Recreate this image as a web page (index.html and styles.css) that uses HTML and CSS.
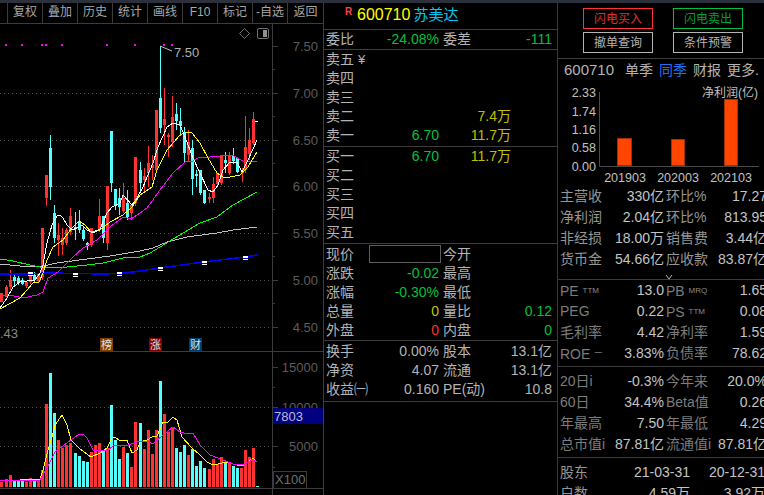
FILE: index.html

```html
<!DOCTYPE html>
<html lang="zh-CN">
<head>
    <meta charset="UTF-8">
    <title>600710 苏美达</title>
    <link rel="stylesheet" href="styles.css">
</head>
<body>
    <div class="top-strip"></div>
    <div class="app">
        <section class="chart-pane">
            <nav class="toolbar">
                <span>复权</span><span>叠加</span><span>历史</span><span>统计</span><span>画线</span><span>F10</span><span>标记</span><span>-自选</span><span>返回</span>
            </nav>
            <svg class="chart" id="kline" width="323" height="471" viewBox="0 24 323 471">
                <g class="grid-lines">
                    <path d="M0 93.5H272M0 140.5H272M0 186.5H272M0 233.5H272M0 280.5H272M0 327.5H272M0 407.5H272M0 446.5H272"/>
                </g>
                <g id="candles"></g>
                <g id="volumes"></g>
                <g id="lines"></g>
                <g id="markers"></g>

                <path class="axis" d="M272.5 23V495M0 351.5H323M0 488.5H323"/>
                <path class="axis" d="M272 46.5h6M272 69.5h3M272 93.5h6M272 116.5h3M272 140.5h6M272 163.5h3M272 186.5h6M272 209.5h3M272 233.5h6M272 256.5h3M272 280.5h6M272 303.5h3M272 327.5h6M272 367.5h6M272 387.5h3M272 407.5h6M272 446.5h6M272 467.5h3"/>
                <g class="axis-text">
                    <text x="318" y="51">7.50</text>
                    <text x="318" y="98">7.00</text>
                    <text x="318" y="145">6.50</text>
                    <text x="318" y="191">6.00</text>
                    <text x="318" y="238">5.50</text>
                    <text x="318" y="285">5.00</text>
                    <text x="318" y="332">4.50</text>
                    <text x="318" y="372">15000</text>
                    <text x="318" y="412">10000</text>
                    <text x="318" y="451">5000</text>
                </g>
                <rect class="vol-box" x="273" y="408" width="50" height="16"/>
                <text class="vol-now" x="274" y="421">7803</text>
                <rect class="zoom-box" x="273.5" y="471.5" width="33" height="17"/>
                <text class="zoom-text" x="275" y="484">X100</text>

                <path class="hi-line" d="M160 46L172 51"/>
                <text class="hi-text" x="174" y="57">7.50</text>
                <text class="lo-text" x="0" y="338">.43</text>

                <rect class="badge badge-brown" x="100" y="338" width="13" height="13"/>
                <text class="badge-text" x="101" y="349">榜</text>
                <rect class="badge badge-red" x="149" y="338" width="13" height="13"/>
                <text class="badge-text" x="150" y="349">涨</text>
                <rect class="badge badge-blue" x="189" y="338" width="13" height="13"/>
                <text class="badge-text" x="190" y="349">财</text>

                <path class="diamond" d="M244.5 28.5l5 5-5 5-5-5z"/>
                <rect class="toggle" x="257.5" y="28.5" width="11" height="10" rx="1.5"/>
                <rect class="toggle-fill" x="263" y="30" width="4" height="7"/>
            </svg>
        </section>

        <section class="quote-pane">
            <div class="stock-title">
                <span class="r-mark">R</span><span class="code">600710</span><span class="name">苏美达</span>
            </div>
            <div class="block">
                <div class="row row-four">
                    <span>委比</span><span class="num green">-24.08%</span><span class="label2">委差</span><span class="num green">-111</span>
                </div>
            </div>
            <div class="block book">
                <div class="row row-book"><span>卖五 <i class="yen">¥</i></span><span></span><span></span></div>
                <div class="row row-book"><span>卖四</span><span></span><span></span></div>
                <div class="row row-book"><span>卖三</span><span></span><span></span></div>
                <div class="row row-book"><span>卖二</span><span></span><span class="num yellow">7.4万</span></div>
                <div class="row row-book"><span>卖一</span><span class="num green">6.70</span><span class="num yellow">11.7万</span></div>
            </div>
            <div class="block book">
                <div class="row row-book"><span>买一</span><span class="num green">6.70</span><span class="num yellow">11.7万</span></div>
                <div class="row row-book"><span>买二</span><span></span><span></span></div>
                <div class="row row-book"><span>买三</span><span></span><span></span></div>
                <div class="row row-book"><span>买四</span><span></span><span></span></div>
                <div class="row row-book"><span>买五</span><span></span><span></span></div>
            </div>
            <div class="block book summary">
                <div class="row row-four"><span>现价</span><span class="price-box"></span><span class="label2">今开</span><span></span></div>
                <div class="row row-four"><span>涨跌</span><span class="num green">-0.02</span><span class="label2">最高</span><span></span></div>
                <div class="row row-four"><span>涨幅</span><span class="num green">-0.30%</span><span class="label2">最低</span><span></span></div>
                <div class="row row-four"><span>总量</span><span class="num yellow">0</span><span class="label2">量比</span><span class="num green">0.12</span></div>
                <div class="row row-four"><span>外盘</span><span class="num red">0</span><span class="label2">内盘</span><span class="num green">0</span></div>
            </div>
            <div class="block stats">
                <div class="row row-four"><span>换手</span><span class="num">0.00%</span><span class="label2">股本</span><span class="num">13.1亿</span></div>
                <div class="row row-four"><span>净资</span><span class="num">4.07</span><span class="label2">流通</span><span class="num">13.1亿</span></div>
                <div class="row row-four"><span>收益㈠</span><span class="num">0.160</span><span class="label2">PE(动)</span><span class="num">10.8</span></div>
            </div>
        </section>

        <section class="info-pane">
            <div class="trade-buttons">
                <button class="btn btn-buy">闪电买入</button>
                <button class="btn btn-sell">闪电卖出</button>
                <button class="btn">撤单查询</button>
                <button class="btn">条件预警</button>
            </div>
            <div class="tabs">
                <span class="tabs-code">600710</span>
                <span>单季</span><span class="tab-on">同季</span><span>财报</span><span>更多.</span>
            </div>
            <svg class="profit" width="206" height="105" viewBox="558 81 206 105">
                <path class="profit-axis" d="M599.5 92V166.5H759"/>
                <g class="profit-y">
                    <text x="596" y="97">2.33</text>
                    <text x="596" y="116">1.74</text>
                    <text x="596" y="134">1.16</text>
                    <text x="596" y="152">0.58</text>
                    <text x="596" y="171">0.00</text>
                </g>
                <text class="profit-title" x="702" y="97">净利润(亿)</text>
                <rect class="profit-bar" x="617.5" y="138.5" width="14" height="27"/>
                <rect class="profit-bar" x="671.5" y="139.5" width="13" height="26"/>
                <rect class="profit-bar" x="724.5" y="99.5" width="13" height="66"/>
                <g class="profit-x">
                    <text x="625" y="182">201903</text>
                    <text x="678" y="182">202003</text>
                    <text x="731" y="182">202103</text>
                </g>
            </svg>
            <div class="fin-block">
                <div class="fin-row"><span>主营收</span><span class="val">330亿</span><span>环比%</span><span class="val">17.27</span></div>
                <div class="fin-row"><span>净利润</span><span class="val">2.04亿</span><span>环比%</span><span class="val">813.95</span></div>
                <div class="fin-row"><span>非经损</span><span class="val">18.00万</span><span>销售费</span><span class="val">3.44亿</span></div>
                <div class="fin-row"><span>货币金</span><span class="val">54.66亿</span><span>应收款</span><span class="val">83.87亿</span></div>
                <div class="more-row">
                    <svg width="8" height="6" viewBox="0 0 8 6"><path d="M1 1L4 5L7 1"/></svg>
                </div>
            </div>
            <div class="fin-block dim-block">
                <div class="fin-row"><span>PE <small>TTM</small></span><span class="val">13.0</span><span>PB <small>MRQ</small></span><span class="val">1.65</span></div>
                <div class="fin-row"><span>PEG</span><span class="val">0.22</span><span>PS <small>TTM</small></span><span class="val">0.08</span></div>
                <div class="fin-row"><span>毛利率</span><span class="val">4.42</span><span>净利率</span><span class="val">1.59</span></div>
                <div class="fin-row"><span>ROE <small>一</small></span><span class="val">3.83%</span><span>负债率</span><span class="val">78.62</span></div>
            </div>
            <div class="fin-block dim-block perf-block">
                <div class="fin-row"><span>20日i</span><span class="val">-0.3%</span><span>今年来</span><span class="val">20.0%</span></div>
                <div class="fin-row"><span>60日</span><span class="val">34.4%</span><span>Beta值</span><span class="val">0.26</span></div>
                <div class="fin-row"><span>年最高</span><span class="val">7.50</span><span>年最低</span><span class="val">4.29</span></div>
                <div class="fin-row"><span>总市值i</span><span class="val">87.81亿</span><span>流通值i</span><span class="val">87.81亿</span></div>
            </div>
            <div class="holders">
                <div class="holder-row"><span>股东</span><span class="val">21-03-31</span><span class="val">20-12-31</span></div>
                <div class="holder-row"><span>户数</span><span class="val">4.59万</span><span class="val">3.92万</span></div>
            </div>
        </section>
    </div>
    <script src="chart.js"></script>
</body>
</html>
```

FILE: styles.css

```css
* {
    box-sizing: border-box;
}
html, body {
    margin: 0;
    padding: 0;
    height: 100%;
    overflow: hidden;
    background: #000;
}
body {
    font-family: 'Liberation Sans', 'Noto Sans CJK SC', sans-serif;
    font-size: 14px;
    color: #b4b4b4;
}
.top-strip {
    height: 3px;
    background: #2c303c;
}
.app {
    display: flex;
    height: 492px;
}

/* left: k-line */
.chart-pane {
    width: 324px;
    flex: none;
    border-right: 1px solid #3c3c3c;
}
.toolbar {
    display: flex;
    height: 21px;
    padding-left: 7px;
    border-bottom: 1px solid #3c3c3c;
}
.toolbar span {
    width: 35px;
    flex: none;
    line-height: 19px;
    text-align: center;
    font-size: 12px;
    color: #a8a8a8;
    border-left: 1px solid #3c3c3c;
}
.toolbar span:last-child {
    width: 37px;
    border-right: 1px solid #3c3c3c;
}
.chart {
    display: block;
}
.grid-lines path {
    fill: none;
    stroke: #505050;
    stroke-dasharray: 1 3;
}
.axis {
    fill: none;
    stroke: #3c3c3c;
}
.axis-text text {
    font-size: 13px;
    fill: #5c5c5c;
    text-anchor: end;
}
.vol-box {
    fill: #000080;
}
.vol-now {
    font-size: 13px;
    fill: #b8b8d8;
}
.zoom-box {
    fill: #000;
    stroke: #3c3c3c;
}
.zoom-text {
    font-size: 13px;
    fill: #707070;
}
.hi-line {
    stroke: #c0c0c0;
    fill: none;
}
.hi-text {
    font-size: 13px;
    fill: #b0b0b0;
}
.lo-text {
    font-size: 13px;
    fill: #8a8a8a;
}
.badge-brown {
    fill: #804000;
}
.badge-red {
    fill: #800000;
}
.badge-blue {
    fill: #003c6c;
}
.badge-text {
    font-size: 11px;
    fill: #e0e0e0;
}
.diamond, .toggle {
    fill: none;
    stroke: #707070;
}
.toggle-fill {
    fill: #909090;
}

/* middle: order book */
.quote-pane {
    width: 234px;
    flex: none;
    border-right: 1px solid #3c3c3c;
}
.stock-title {
    display: flex;
    height: 27px;
    padding: 2px 0 0 21px;
    border-bottom: 1px solid #3c3c3c;
    line-height: 20px;
}
.r-mark {
    width: 12px;
    font-size: 10px;
    font-weight: bold;
    line-height: 14px;
    color: #ff4040;
}
.code {
    font-size: 16px;
    color: #ffff00;
    margin-right: 3px;
}
.name {
    font-size: 15px;
    color: #00c8f0;
}
.block {
    height: 20px;
    border-bottom: 1px solid #3c3c3c;
}
.book {
    height: 97px;
}
.summary {
    padding-top: 1px;
}
.stats {
    height: 61px;
    padding-top: 1px;
}
.row {
    display: grid;
    height: 19px;
    line-height: 19px;
    padding-left: 2px;
    white-space: nowrap;
}
.row-book {
    grid-template-columns: 40px 73px 72px;
}
.row-four {
    grid-template-columns: 40px 73px 60px 53px;
}
.label2 {
    padding-left: 4px;
}
.num {
    text-align: right;
}
.yen {
    font-style: normal;
    font-size: 13px;
}
.green {
    color: #00c040;
}
.yellow {
    color: #c0c000;
}
.red {
    color: #ff3232;
}
.price-box {
    height: 18px;
    margin: 0 -2px 0 3px;
    border: 1px solid #5c5c5c;
}

/* right: finance */
.info-pane {
    width: 207px;
    flex: none;
    overflow: hidden;
}
.trade-buttons {
    display: grid;
    grid-template-columns: 70px 70px;
    grid-template-rows: 21px 21px;
    column-gap: 20px;
    row-gap: 3px;
    height: 56px;
    padding: 5px 0 0 25px;
    border-bottom: 1px solid #3c3c3c;
}
.btn {
    padding: 0;
    background: #000;
    border: 1px solid #b4b4b4;
    font-family: inherit;
    font-size: 12px;
    line-height: 18px;
    color: #b4b4b4;
}
.btn-buy {
    border-color: #ff3232;
    color: #e03030;
}
.btn-sell {
    border-color: #00c040;
    color: #00a038;
}
.tabs {
    display: flex;
    height: 22px;
    line-height: 22px;
    padding-left: 6px;
    white-space: nowrap;
}
.tabs span {
    margin-right: 6px;
}
.tabs .tabs-code {
    font-size: 15px;
    width: 67px;
    margin-right: 0;
}
.tab-on {
    color: #2070f0;
}
.profit {
    display: block;
}
.profit-axis {
    fill: none;
    stroke: #4a4a4a;
}
.profit-y text {
    font-size: 12.5px;
    fill: #c0c0c0;
    text-anchor: end;
}
.profit-x text {
    font-size: 12.5px;
    fill: #c0c0c0;
    text-anchor: middle;
}
.profit-title {
    font-size: 12px;
    fill: #c0c0c0;
}
.profit-bar {
    fill: #ff4500;
    stroke: #a03000;
}
.fin-block {
    width: 210px;
}
.fin-row {
    display: grid;
    grid-template-columns: 49px 55px 54px 49px;
    height: 21px;
    line-height: 21px;
    padding-left: 2px;
    white-space: nowrap;
    color: #969696;
}
.fin-row span:nth-child(3) {
    padding-left: 2px;
}
.val {
    text-align: right;
    color: #c4c4c4;
}
.more-row {
    height: 10px;
    padding-left: 107px;
    line-height: 10px;
    border-bottom: 1px solid #3c3c3c;
}
.more-row path {
    fill: none;
    stroke: #b4b4b4;
}
.dim-block .fin-row {
    color: #7c7c7c;
}
.dim-block {
    height: 87px;
    border-bottom: 1px solid #3c3c3c;
}
.perf-block {
    height: 91px;
    padding-top: 4px;
}
small {
    font-size: 8px;
    vertical-align: 3px;
    color: #8a8a8a;
}
.holders {
    padding-top: 4px;
}
.holder-row {
    display: grid;
    grid-template-columns: 41px 89px 75px;
    height: 21px;
    line-height: 21px;
    padding-left: 2px;
    white-space: nowrap;
    color: #969696;
}
```

FILE: chart.js

```js
const NS = 'http://www.w3.org/2000/svg';
const RED = '#ff3232';
const CYAN = '#54ffff';

function addRect(parent, x, y, w, h, fill) {
    const r = document.createElementNS(NS, 'rect');
    r.setAttribute('x', x);
    r.setAttribute('y', y);
    r.setAttribute('width', w);
    r.setAttribute('height', h);
    r.setAttribute('fill', fill);
    r.setAttribute('shape-rendering', 'crispEdges');
    parent.appendChild(r);
}

function addLine(parent, points, color, width) {
    const p = document.createElementNS(NS, 'polyline');
    p.setAttribute('points', points);
    p.setAttribute('fill', 'none');
    p.setAttribute('stroke', color);
    p.setAttribute('stroke-width', width || 1);
    p.setAttribute('shape-rendering', 'crispEdges');
    parent.appendChild(p);
}

// x, body top, body bottom, wick top, wick bottom, r = red / c = cyan
const candles = [
    [0,293,302,293,302,'r'],[5,287,297,285,297,'r'],[9,280,287,270,290,'r'],[13,277,281,275,285,'c'],
    [17,278,283,276,285,'c'],[21,280,284,278,285,'c'],[25,282,286,282,288,'r'],[29,274,282,272,284,'r'],
    [33,275,280,272,282,'c'],[37,274,281,274,283,'r'],[41,228,277,228,280,'r'],[45,175,198,175,206,'r'],
    [49,148,187,135,200,'c'],[53,213,238,205,243,'c'],[57,235,240,223,256,'r'],[61,238,245,228,255,'r'],
    [65,230,243,228,245,'r'],[69,216,232,208,235,'r'],[74,227,229,212,240,'c'],[78,222,230,210,233,'c'],
    [82,230,239,227,241,'c'],[86,243,246,242,250,'c'],[90,228,245,228,247,'r'],[98,216,229,199,232,'r'],
    [102,216,238,216,243,'c'],[106,186,243,186,250,'r'],[110,131,183,131,192,'c'],[114,189,206,189,210,'c'],
    [118,198,207,188,215,'c'],[122,198,211,183,213,'r'],[126,203,217,190,220,'c'],[130,205,213,205,220,'r'],
    [134,157,203,157,206,'r'],[139,170,183,162,190,'c'],[143,176,180,168,192,'r'],[147,163,173,146,187,'r'],
    [151,165,168,155,180,'r'],[155,110,170,110,172,'r'],[159,98,128,46,133,'c'],[163,119,125,88,145,'r'],
    [167,135,137,133,157,'r'],[171,117,142,96,147,'r'],[175,114,121,103,130,'c'],[179,121,126,108,136,'c'],
    [183,132,153,127,162,'c'],[187,142,155,130,162,'r'],[191,148,179,140,195,'c'],[195,174,176,170,187,'c'],
    [199,170,193,170,195,'c'],[203,190,203,190,204,'c'],[208,197,199,193,203,'r'],[212,184,198,177,203,'r'],
    [216,173,184,173,186,'r'],[220,155,183,155,185,'r'],[224,160,163,152,173,'c'],[228,155,173,152,175,'r'],
    [232,156,161,148,164,'c'],[236,158,172,158,173,'c'],[241,170,173,168,182,'r'],[244,147,170,116,173,'r'],
    [248,140,154,128,160,'r'],[252,119,143,112,145,'r']
];

// x, top in zoomed px of the volume pane, r / c
const volumes = [
    [0,365,'r'],[5,358,'r'],[9,345,'r'],[13,363,'c'],[17,363,'c'],[21,363,'c'],[25,365,'r'],[29,354,'r'],
    [33,363,'c'],[37,360,'r'],[41,330,'r'],[45,132,'r'],[49,39,'c'],[53,159,'c'],[57,240,'r'],[61,265,'r'],
    [65,255,'r'],[69,250,'r'],[74,279,'c'],[78,288,'c'],[82,303,'c'],[86,306,'c'],[90,276,'r'],[94,255,'r'],
    [98,249,'r'],[102,270,'c'],[106,265,'r'],[110,135,'c'],[114,240,'c'],[118,297,'c'],[122,261,'r'],[126,279,'c'],
    [130,321,'r'],[134,186,'r'],[139,189,'c'],[143,267,'r'],[147,210,'r'],[151,282,'r'],[155,210,'r'],[159,63,'c'],
    [163,162,'r'],[167,216,'r'],[171,201,'r'],[175,264,'c'],[179,276,'c'],[183,255,'c'],[187,285,'r'],[191,267,'c'],
    [195,318,'c'],[199,303,'c'],[203,324,'c'],[208,327,'r'],[212,297,'r'],[216,312,'r'],[220,291,'r'],[224,306,'c'],
    [228,306,'r'],[232,318,'c'],[236,324,'c'],[240,324,'r'],[244,270,'r'],[248,291,'r'],[252,264,'r'],[256,378,'c']
];

const maLines = [
    ['#c0c0c0', '0,264 20,266 43,266 57,263 87,259 110,256 140,251 153,248 167,242 187,237 217,233 233,230 257,227'],
    ['#00ff00', '0,259 13,261 30,265 45,268 67,267 87,265 103,263 123,258 140,257 150,253 170,241 200,223 217,217 233,205 257,192'],
    ['#0000ff', '0,274 20,274 47,273 107,274 133,272 160,268 203,262 245,257 257,255', 1.5],
    ['#ff00ff', '0,295 10,295 23,298 37,295 43,292 48,278 58,272 72,258 83,248 97,240 110,227 123,217 131,219 140,213 147,208 160,190 173,173 185,162 193,161 198,158 210,157 220,156 232,155 243,161 257,162'],
    ['#ffff00', '0,309 20,298 33,283 39,282 43,273 47,260 53,247 63,240 72,228 79,221 85,225 91,232 100,230 110,222 123,215 132,207 140,195 152,187 157,170 167,150 180,135 187,132 192,133 200,143 208,158 217,173 223,177 230,177 240,175 248,167 257,152'],
    ['#ffffff', '0,308 7,298 13,287 20,282 27,281 35,280 40,273 43,265 47,243 52,225 57,216 60,215 63,218 67,225 72,230 77,228 82,225 87,230 93,233 100,229 107,213 112,207 120,203 123,195 132,205 137,198 143,187 147,177 153,163 158,147 167,127 173,123 180,125 185,137 193,158 200,173 208,190 213,192 218,185 223,170 230,162 237,162 242,172 248,160 257,140'],
    ['#ffff00', '0,481 40,479 43,470 48,450 52,437 55,425 62,415 67,425 71,440 80,449 91,457 100,453 107,448 112,438 115,437 119,440 127,440 132,453 137,450 140,442 147,440 152,437 157,436 163,422 168,422 173,417 177,420 182,437 192,448 200,455 207,462 213,465 227,462 233,464 242,466 247,463 253,458 257,462'],
    ['#ff00ff', '0,481 40,480 47,468 55,452 68,442 78,435 83,434 87,438 93,450 107,451 113,446 128,445 137,442 147,441 153,444 163,435 173,427 180,432 188,434 193,433 200,445 210,455 223,460 233,464 245,464 253,459 257,462']
];

const candleBox = document.getElementById('candles');
candles.forEach(function(c) {
    const color = c[5] === 'r' ? RED : CYAN;
    addRect(candleBox, c[0] + 1, c[3], 1, c[4] - c[3], color);
    addRect(candleBox, c[0], c[1], 3, c[2] - c[1], color);
});

const volumeBox = document.getElementById('volumes');
volumes.forEach(function(v) {
    const top = 360 + Math.round(v[1] / 3);
    addRect(volumeBox, v[0], top, 3, 487 - top, v[2] === 'r' ? RED : CYAN);
});

const lineBox = document.getElementById('lines');
maLines.forEach(function(l) {
    addLine(lineBox, l[1], l[0], l[2]);
});

const markerBox = document.getElementById('markers');
// magenta flags along the top
[6, 22, 42, 46, 62, 107, 135, 164, 172].forEach(function(x) {
    addRect(markerBox, x - 1, 44, 2, 2, '#ff00ff');
});
// white ticks on the long average
[28, 73, 117, 158, 202, 243].forEach(function(x) {
    const y = { 28: 272, 73: 273, 117: 272, 158: 267, 202: 261, 243: 256 }[x];
    addRect(markerBox, x, y, 5, 4, '#ffffff');
    addRect(markerBox, x, y + 2, 5, 1, '#0000ff');
});
addRect(markerBox, 255, 121, 3, 1, '#ffffff');
```
